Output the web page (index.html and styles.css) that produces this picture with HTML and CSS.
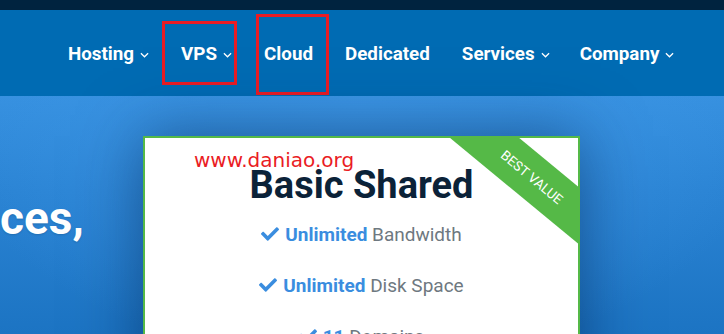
FILE: index.html
```html
<!DOCTYPE html>
<html>
<head>
<meta charset="utf-8">
<link rel="stylesheet" href="styles.css">
</head>
<body>
<div class="topbar"></div>
<nav class="nav">
  <a class="nav-item">Hosting<svg class="chev" viewBox="0 0 10 6"><path d="M1 1l4 4 4-4"/></svg></a>
  <a class="nav-item">VPS<svg class="chev" viewBox="0 0 10 6"><path d="M1 1l4 4 4-4"/></svg></a>
  <a class="nav-item">Cloud</a>
  <a class="nav-item">Dedicated</a>
  <a class="nav-item">Services<svg class="chev" viewBox="0 0 10 6"><path d="M1 1l4 4 4-4"/></svg></a>
  <a class="nav-item">Company<svg class="chev" viewBox="0 0 10 6"><path d="M1 1l4 4 4-4"/></svg></a>
  <div class="mark mark-vps"></div>
  <div class="mark mark-cloud"></div>
</nav>
<section class="hero">
  <div class="hero-text">ces,</div>
  <div class="card">
    <div class="ribbon">BEST VALUE</div>
    <div class="watermark">www.daniao.org</div>
    <h2 class="title">Basic Shared</h2>
    <ul class="features">
      <li><svg class="check" viewBox="0 0 512 512"><path d="M173.898 439.404l-166.4-166.4c-9.997-9.997-9.997-26.206 0-36.204l36.203-36.204c9.997-9.998 26.207-9.998 36.204 0L192 312.69 432.095 72.596c9.997-9.997 26.207-9.997 36.204 0l36.203 36.204c9.997 9.997 9.997 26.206 0 36.204l-294.4 294.401c-9.998 9.997-26.207 9.997-36.204-.001z"/></svg><b>Unlimited</b> Bandwidth</li>
      <li><svg class="check" viewBox="0 0 512 512"><path d="M173.898 439.404l-166.4-166.4c-9.997-9.997-9.997-26.206 0-36.204l36.203-36.204c9.997-9.998 26.207-9.998 36.204 0L192 312.69 432.095 72.596c9.997-9.997 26.207-9.997 36.204 0l36.203 36.204c9.997 9.997 9.997 26.206 0 36.204l-294.4 294.401c-9.998 9.997-26.207 9.997-36.204-.001z"/></svg><b>Unlimited</b> Disk Space</li>
      <li><svg class="check" viewBox="0 0 512 512"><path d="M173.898 439.404l-166.4-166.4c-9.997-9.997-9.997-26.206 0-36.204l36.203-36.204c9.997-9.998 26.207-9.998 36.204 0L192 312.69 432.095 72.596c9.997-9.997 26.207-9.997 36.204 0l36.203 36.204c9.997 9.997 9.997 26.206 0 36.204l-294.4 294.401c-9.998 9.997-26.207 9.997-36.204-.001z"/></svg><b>11</b> Domains</li>
    </ul>
  </div>
</section>
</body>
</html>
```
FILE: styles.css
```css
* { box-sizing: border-box; }
html, body { margin: 0; padding: 0; }
body {
  width: 724px;
  height: 334px;
  overflow: hidden;
  font-family: Roboto, "Liberation Sans", sans-serif;
  background: #2a82d2;
}
.topbar { height: 10px; background: #00233f; }
.nav {
  position: relative;
  height: 86px;
  background: #006bb3;
  display: flex;
  align-items: center;
  padding-left: 52px;
  padding-top: 2px;
}
.nav-item {
  display: flex;
  align-items: center;
  padding: 0 16px;
  color: #fff;
  font-size: 18.8px;
  font-weight: 700;
  white-space: nowrap;
}
.nav-item:last-of-type { padding-left: 14px; }
.chev {
  width: 9px;
  height: 6px;
  margin-left: 6px;
  margin-top: 2px;
  fill: none;
  stroke: #fff;
  stroke-width: 1.4;
}
.mark {
  position: absolute;
  border: 3px solid #ea1c24;
}
.mark-vps { left: 162px; top: 11px; width: 75px; height: 64px; }
.mark-cloud { left: 256px; top: 4px; width: 73px; height: 81px; }
.hero {
  height: 238px;
  display: flex;
  align-items: flex-start;
  padding-top: 40px;
  background:
    radial-gradient(ellipse 420px 260px at 360px 10px, rgba(60,150,230,0.9), rgba(60,150,230,0) 100%),
    linear-gradient(180deg, #3690df 0%, #2a83d3 40%, #1c74c3 100%);
}
.hero-text {
  width: 143px;
  margin-top: 55px;
  color: #fff;
  font-size: 46px;
  font-weight: 700;
  line-height: 1.2;
  text-shadow: 0 1px 2px rgba(0,0,0,0.15);
}
.card {
  position: relative;
  width: 437px;
  height: 260px;
  background: #fff;
  border: 2px solid #55b947;
  overflow: hidden;
  padding-top: 27px;
  text-align: center;
  box-shadow: 0 0 60px rgba(0, 35, 80, 0.55);
}
.ribbon {
  position: absolute;
  left: 267px;
  top: 17px;
  width: 240px;
  height: 44px;
  background: #55b947;
  color: #fff;
  font-size: 13.5px;
  line-height: 44px;
  text-align: center;
  transform: rotate(39.5deg);
}
.watermark {
  position: absolute;
  left: 49px;
  top: 12px;
  color: #ea1c24;
  font-family: "DejaVu Sans", sans-serif;
  font-size: 20px;
  line-height: 1;
}
.title {
  margin: 0;
  font-size: 38px;
  line-height: 40px;
  font-weight: 700;
  color: #0b2238;
}
.features {
  list-style: none;
  margin: 4px 0 0;
  padding: 0;
}
.features li {
  line-height: 51px;
  font-size: 19px;
  color: #6e7880;
}
.features b { color: #3a8ddf; font-weight: 700; }
.check {
  width: 18px;
  height: 18px;
  fill: #3a8ddf;
  vertical-align: -2px;
  margin-right: 6px;
}
```
